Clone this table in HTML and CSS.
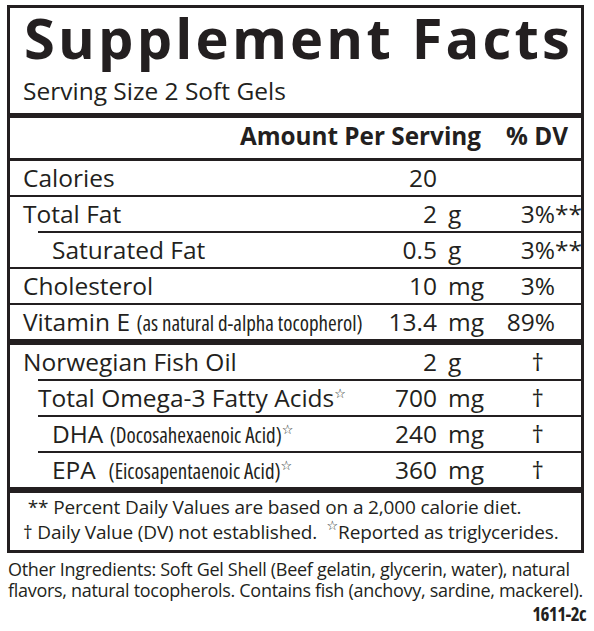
FILE: index.html
```html
<!DOCTYPE html>
<html lang="en">
<head>
    <meta charset="UTF-8">
    <title>Supplement Facts</title>
    <link rel="stylesheet" href="styles.css">
</head>
<body>

    <div class="label">
        <h1 class="title">Supplement Facts</h1>
        <p class="serving">Serving Size 2 Soft Gels</p>
        <div class="bar"></div>

        <div class="row head">
            <span class="name"></span>
            <span class="amt-head">Amount Per Serving</span>
            <span class="dv-head">% DV</span>
        </div>
        <div class="rule mid"></div>

        <div class="row">
            <span class="name">Calories</span>
            <span class="amt">20</span>
            <span class="unit"></span>
            <span class="dv"></span>
            <span class="note"></span>
        </div>
        <div class="rule"></div>

        <div class="row">
            <span class="name">Total Fat</span>
            <span class="amt">2</span>
            <span class="unit">g</span>
            <span class="dv">3%</span>
            <span class="note">**</span>
        </div>
        <div class="rule short"></div>

        <div class="row">
            <span class="name sub2">Saturated Fat</span>
            <span class="amt">0.5</span>
            <span class="unit">g</span>
            <span class="dv">3%</span>
            <span class="note">**</span>
        </div>
        <div class="rule"></div>

        <div class="row">
            <span class="name">Cholesterol</span>
            <span class="amt">10</span>
            <span class="unit">mg</span>
            <span class="dv">3%</span>
            <span class="note"></span>
        </div>
        <div class="rule"></div>

        <div class="row">
            <span class="name">Vitamin E <small class="cond">(as natural d-alpha tocopherol)</small></span>
            <span class="amt">13.4</span>
            <span class="unit">mg</span>
            <span class="dv">89%</span>
            <span class="note"></span>
        </div>
        <div class="bar thin"></div>

        <div class="row">
            <span class="name">Norwegian Fish Oil</span>
            <span class="amt">2</span>
            <span class="unit">g</span>
            <span class="dv dagger">†</span>
            <span class="note"></span>
        </div>
        <div class="rule short"></div>

        <div class="row">
            <span class="name sub1">Total Omega-3 Fatty Acids<sup class="star">☆</sup></span>
            <span class="amt">700</span>
            <span class="unit">mg</span>
            <span class="dv dagger">†</span>
            <span class="note"></span>
        </div>
        <div class="rule short"></div>

        <div class="row">
            <span class="name sub2">DHA <small class="cond">(Docosahexaenoic Acid)</small><sup class="star">☆</sup></span>
            <span class="amt">240</span>
            <span class="unit">mg</span>
            <span class="dv dagger">†</span>
            <span class="note"></span>
        </div>
        <div class="rule short"></div>

        <div class="row">
            <span class="name sub2">EPA &nbsp;<small class="cond">(Eicosapentaenoic Acid)</small><sup class="star">☆</sup></span>
            <span class="amt">360</span>
            <span class="unit">mg</span>
            <span class="dv dagger">†</span>
            <span class="note"></span>
        </div>
        <div class="bar thin"></div>

        <div class="notes">
            <p>&nbsp;** Percent Daily Values are based on a 2,000 calorie diet.</p>
            <p>† Daily Value (DV) not established. &nbsp;<sup class="star">☆</sup>Reported as triglycerides.</p>
        </div>
    </div>

    <div class="other">
        <p>Other Ingredients: Soft Gel Shell (Beef gelatin, glycerin, water), natural flavors, natural tocopherols. Contains fish (anchovy, sardine, mackerel).</p>
        <p class="code">1611-2c</p>
    </div>

</body>
</html>
```

FILE: styles.css
```css
* {
    margin: 0;
    padding: 0;
    box-sizing: border-box;
}
body {
    background: #fff;
    color: #231f20;
    font-family: 'Open Sans', sans-serif;
}
.label {
    width: 577px;
    margin: 5px 0 0 7px;
    border: 3px solid #231f20;
}
.title {
    font-size: 56px;
    font-weight: 700;
    line-height: 58px;
    padding-left: 14px;
    letter-spacing: 3.2px;
    white-space: nowrap;
}
.serving {
    font-size: 24.5px;
    line-height: 30px;
    padding: 10px 0 7px 13px;
}
.bar {
    height: 5px;
    background: #231f20;
}
.bar.thin {
    height: 6px;
}
.rule {
    height: 2px;
    background: #231f20;
}
.rule.mid {
    height: 3px;
}
.rule.short {
    margin-left: 28px;
}
.row {
    display: grid;
    grid-template-columns: minmax(0, 1fr) 67px 58px 60px 26px;
    height: 34px;
    font-size: 24.5px;
    line-height: 34px;
    white-space: nowrap;
}
.row.head {
    grid-template-columns: minmax(0, 1fr) 260px 100px;
    font-weight: 700;
    font-size: 24.3px;
    height: 40px;
    line-height: 36px;
}
.amt-head {
    text-align: right;
}
.dv-head {
    text-align: right;
    padding-right: 13px;
}
.name {
    padding-left: 13px;
}
.name.sub1 {
    padding-left: 28px;
}
.name.sub2 {
    padding-left: 42px;
}
.amt {
    text-align: right;
}
.unit {
    padding-left: 11px;
}
.dv {
    text-align: right;
}
.dv.dagger {
    padding-right: 11px;
}
.cond {
    font-size: 21px;
    line-height: 1;
    font-stretch: 75%;
}
.star {
    font-family: 'DejaVu Sans', sans-serif;
    font-size: 13px;
    vertical-align: 9px;
    line-height: 0;
}
.notes {
    height: 57px;
    font-size: 19px;
    line-height: 25px;
    letter-spacing: -0.15px;
    padding: 2px 0 0 13px;
    white-space: nowrap;
}
.other {
    font-size: 18px;
    line-height: 21px;
    letter-spacing: -0.3px;
    padding: 6px 8px 0 8px;
}
.code {
    text-align: right;
    font-weight: 700;
    font-size: 19px;
    line-height: 20px;
    font-stretch: 75%;
    letter-spacing: -0.6px;
    padding-top: 3px;
}
```
